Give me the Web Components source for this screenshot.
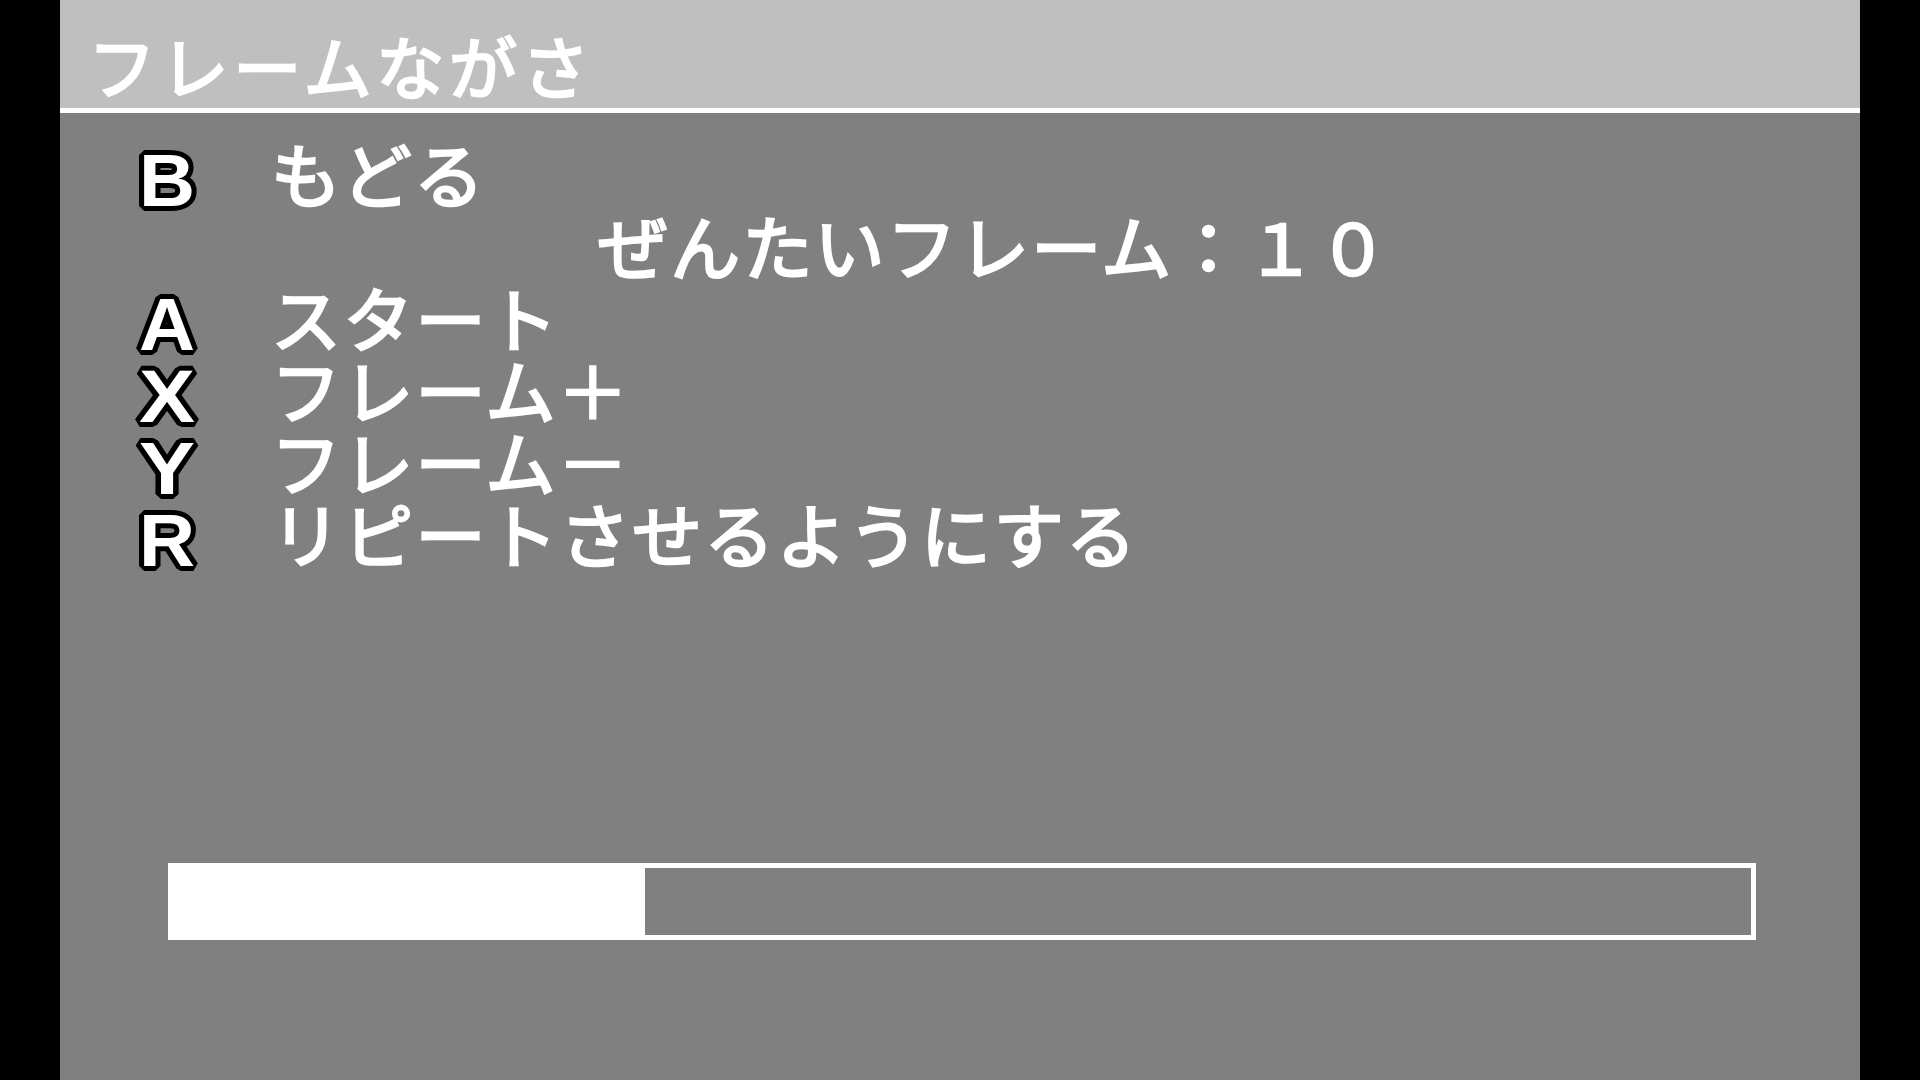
<!DOCTYPE html>
<html lang="ja">
<head>
<meta charset="utf-8">
<title>フレームながさ</title>
<style>
html, body { margin: 0; height: 100%; background: #000; }
</style>
</head>
<body>
<game-screen>
    <title-bar>フレームながさ</title-bar>
    <menu-row key="B">もどる</menu-row>
    <menu-row indent="327">ぜんたいフレーム:10</menu-row>
    <menu-row key="A">スタート</menu-row>
    <menu-row key="X">フレーム+</menu-row>
    <menu-row key="Y">フレーム-</menu-row>
    <menu-row key="R">リピートさせるようにする</menu-row>
    <frame-meter value="472" max="1578"></frame-meter>
</game-screen>

<script>
const FONT = `"Noto Sans CJK JP", "Liberation Sans", sans-serif`;

class GameScreen extends HTMLElement {
    constructor () {
        super();
        this.attachShadow({mode: "open"});
        this.shadowRoot.innerHTML = `
        <style>
        :host {
            display: flex;
            justify-content: center;
            width: 1920px;
            height: 1080px;
            background: #000;
        }
        main {
            display: flex;
            flex-direction: column;
            width: 1800px;
            height: 1080px;
            background: #808080;
            color: #fff;
            font-family: ${FONT};
        }
        </style>
        <main><slot></slot></main>
        `;
    }
}

class TitleBar extends HTMLElement {
    constructor () {
        super();
        this.attachShadow({mode: "open"});
        this.shadowRoot.innerHTML = `
        <style>
        :host {
            display: flex;
            align-items: flex-end;
            box-sizing: border-box;
            height: 113px;
            padding: 0 0 7px 28px;
            margin-bottom: 31px;
            background: #bfbfbf;
            border-bottom: 5px solid #fff;
            color: #fff;
            font-family: ${FONT};
            font-size: 68px;
            font-weight: 400;
            -webkit-text-stroke: 2.5px #fff;
            letter-spacing: 4.6px;
            line-height: 72px;
            white-space: nowrap;
        }
        span { filter: blur(0.6px); }
        </style>
        <span><slot></slot></span>
        `;
    }
}

class MenuRow extends HTMLElement {
    constructor () {
        super();
        this.attachShadow({mode: "open"});
    }

    connectedCallback () {
        const key = this.getAttribute("key");
        const indent = this.getAttribute("indent") || 0;
        this.shadowRoot.innerHTML = `
        <style>
        :host {
            display: flex;
            align-items: center;
            height: 72px;
            padding-left: 75px;
        }
        .cell {
            flex: none;
            width: 136px;
        }
        .text {
            margin: -14px 0 0 ${indent}px;
            font-size: 70px;
            font-weight: 400;
            -webkit-text-stroke: 2.5px #fff;
            letter-spacing: 2.2px;
            line-height: 72px;
            white-space: nowrap;
            font-feature-settings: "fwid";
            filter: blur(0.6px);
        }
        </style>
        <div class="cell">${key ? `<key-icon>${key}</key-icon>` : ""}</div>
        <div class="text"><slot></slot></div>
        `;
    }
}

class KeyIcon extends HTMLElement {
    constructor () {
        super();
        this.attachShadow({mode: "open"});
    }

    connectedCallback () {
        this.shadowRoot.innerHTML = `
        <style>
        :host {
            display: flex;
            width: 64px;
            height: 64px;
        }
        svg {
            flex: none;
            margin: -18px;
            filter: blur(0.4px);
        }
        text {
            fill: #fff;
            stroke: #000;
            stroke-width: 10px;
            stroke-linejoin: bevel;
            paint-order: stroke fill;
            font-family: "Liberation Sans", sans-serif;
            font-size: 75px;
            font-weight: 700;
            text-anchor: middle;
        }
        </style>
        <svg width="100" height="100" viewBox="0 0 100 100">
            <text x="50" y="76" textLength="56" lengthAdjust="spacingAndGlyphs">${this.textContent}</text>
        </svg>
        `;
    }
}

class FrameMeter extends HTMLElement {
    constructor () {
        super();
        this.attachShadow({mode: "open"});
    }

    connectedCallback () {
        const pct = this.getAttribute("value") / this.getAttribute("max") * 100;
        this.shadowRoot.innerHTML = `
        <style>
        :host {
            display: block;
            box-sizing: border-box;
            width: 1588px;
            height: 77px;
            margin: 287px 0 0 108px;
            border: 5px solid #fff;
        }
        div {
            width: ${pct}%;
            height: 100%;
            background: #fff;
        }
        </style>
        <div></div>
        `;
    }
}

customElements.define("game-screen", GameScreen);
customElements.define("title-bar", TitleBar);
customElements.define("menu-row", MenuRow);
customElements.define("key-icon", KeyIcon);
customElements.define("frame-meter", FrameMeter);
</script>
</body>
</html>
